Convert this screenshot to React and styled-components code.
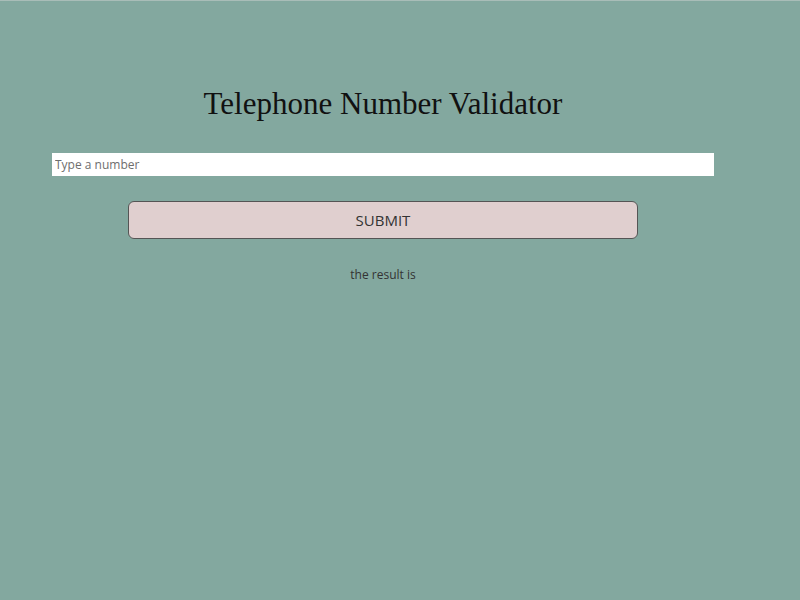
import React, { useState } from "react";
import styled, { createGlobalStyle } from "styled-components";

const GlobalStyle = createGlobalStyle`
  html, body {
    margin: 0;
    padding: 0;
    background: #83a89f;
  }
  body {
    border-top: 1px solid #a9bdb8;
    min-height: 599px;
  }
`;

const Page = styled.div`
  width: 766px;
  display: flex;
  flex-direction: column;
  align-items: center;
  padding-top: 84px;
`;

const Title = styled.h1`
  margin: 0 0 31px;
  font-family: "Liberation Serif", "Times New Roman", serif;
  font-weight: 400;
  font-size: 31px;
  line-height: 37px;
  color: #111;
`;

const NumberInput = styled.input`
  box-sizing: border-box;
  width: 662px;
  height: 23px;
  margin: 0 0 25px;
  padding: 0 3px;
  border: none;
  outline: none;
  background: #fff;
  font-family: "Open Sans", "Noto Sans", sans-serif;
  font-size: 12px;
  color: #333;

  &::placeholder {
    color: #6e6e6e;
  }
`;

const SubmitButton = styled.button`
  box-sizing: border-box;
  width: 510px;
  height: 38px;
  border: 1px solid #555;
  border-radius: 6px;
  background: #e0cfcf;
  font-family: "Open Sans", "Noto Sans", sans-serif;
  font-size: 15px;
  color: #333;
  cursor: pointer;
`;

const Result = styled.p`
  margin: 27px 0 0;
  font-family: "Open Sans", "Noto Sans", sans-serif;
  font-size: 12px;
  color: #333;
`;

export default function App() {
  const [value, setValue] = useState("");
  return (
    <>
      <GlobalStyle />
      <Page>
        <Title>Telephone Number Validator</Title>
        <NumberInput
          placeholder="Type a number"
          value={value}
          onChange={(e) => setValue(e.target.value)}
        />
        <SubmitButton>SUBMIT</SubmitButton>
        <Result>the result is</Result>
      </Page>
    </>
  );
}
